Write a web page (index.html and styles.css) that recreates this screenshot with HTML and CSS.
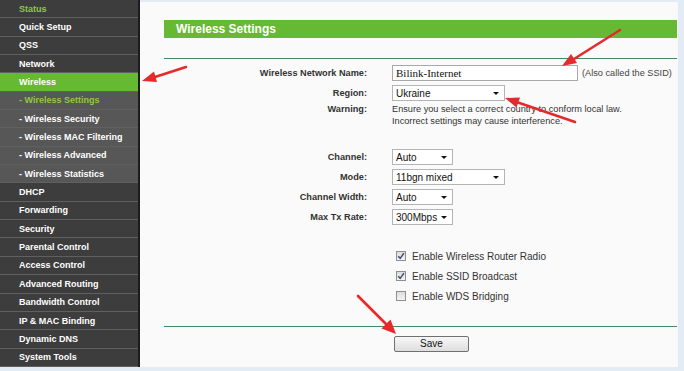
FILE: index.html
```html
<!DOCTYPE html>
<html>
<head>
<link rel="stylesheet" href="styles.css">
</head>
<body>

<div class="page">
  <div class="menu">
    <a class="item lead" href="#">Status</a>
    <a class="item" href="#">Quick Setup</a>
    <a class="item" href="#">QSS</a>
    <a class="item" href="#">Network</a>
    <a class="item active" href="#">Wireless</a>
    <a class="item sub current" href="#">- Wireless Settings</a>
    <a class="item sub" href="#">- Wireless Security</a>
    <a class="item sub" href="#">- Wireless MAC Filtering</a>
    <a class="item sub" href="#">- Wireless Advanced</a>
    <a class="item sub" href="#">- Wireless Statistics</a>
    <a class="item" href="#">DHCP</a>
    <a class="item" href="#">Forwarding</a>
    <a class="item" href="#">Security</a>
    <a class="item" href="#">Parental Control</a>
    <a class="item" href="#">Access Control</a>
    <a class="item" href="#">Advanced Routing</a>
    <a class="item" href="#">Bandwidth Control</a>
    <a class="item" href="#">IP &amp; MAC Binding</a>
    <a class="item" href="#">Dynamic DNS</a>
    <a class="item" href="#">System Tools</a>
  </div>

  <div class="main">
    <div class="panel">
      <div class="title">Wireless Settings</div>
      <div class="rule top"></div>

      <div class="row first">
        <label class="lbl">Wireless Network Name:</label>
        <div class="val">
          <input class="text" type="text" value="Bilink-Internet">
          <span class="note">(Also called the SSID)</span>
        </div>
      </div>
      <div class="row">
        <label class="lbl">Region:</label>
        <div class="val">
          <span class="sel wide"><select><option>Ukraine</option></select></span>
        </div>
      </div>
      <div class="row warn">
        <label class="lbl">Warning:</label>
        <div class="val msg">
          Ensure you select a correct country to conform local law.<br>
          Incorrect settings may cause interference.
        </div>
      </div>

      <div class="row gap">
        <label class="lbl">Channel:</label>
        <div class="val"><span class="sel"><select><option>Auto</option></select></span></div>
      </div>
      <div class="row">
        <label class="lbl">Mode:</label>
        <div class="val"><span class="sel wide"><select><option>11bgn mixed</option></select></span></div>
      </div>
      <div class="row">
        <label class="lbl">Channel Width:</label>
        <div class="val"><span class="sel"><select><option>Auto</option></select></span></div>
      </div>
      <div class="row">
        <label class="lbl">Max Tx Rate:</label>
        <div class="val"><span class="sel"><select><option>300Mbps</option></select></span></div>
      </div>

      <div class="row gap">
        <span></span>
        <div class="val check">
          <span class="box"><svg width="8" height="8" viewBox="0 0 8 8"><path d="M1.2 4.2 L3.2 6.3 L6.9 1.2" fill="none" stroke="#3b4a6b" stroke-width="1.4"/></svg></span>
          Enable Wireless Router Radio
        </div>
      </div>
      <div class="row">
        <span></span>
        <div class="val check">
          <span class="box"><svg width="8" height="8" viewBox="0 0 8 8"><path d="M1.2 4.2 L3.2 6.3 L6.9 1.2" fill="none" stroke="#3b4a6b" stroke-width="1.4"/></svg></span>
          Enable SSID Broadcast
        </div>
      </div>
      <div class="row">
        <span></span>
        <div class="val check">
          <span class="box"></span>
          Enable WDS Bridging
        </div>
      </div>

      <div class="rule bottom"></div>
      <div class="actions">
        <button class="btn">Save</button>
      </div>
    </div>
  </div>
</div>

<!-- red annotation arrows drawn over the screenshot -->
<svg class="marks" width="684" height="371" viewBox="0 0 684 371">
  <g stroke="#e52a2c" stroke-width="2.6" stroke-linecap="round" fill="#e52a2c">
    <line x1="186" y1="67" x2="155" y2="77"/>
    <polygon stroke="none" points="142,81 157,82 154,71.5"/>
    <line x1="620" y1="30" x2="574" y2="59"/>
    <polygon stroke="none" points="562,66 577,63 571,54"/>
    <line x1="575" y1="122" x2="518" y2="102.5"/>
    <polygon stroke="none" points="505,98 520,97.5 516.5,107.5"/>
    <line x1="358" y1="296" x2="386" y2="324"/>
    <polygon stroke="none" points="396,334 390.5,319.5 381.5,328.5"/>
  </g>
</svg>

</body>
</html>
```

FILE: styles.css
```css
body {
    margin: 0;
    width: 684px;
    height: 371px;
    overflow: hidden;
    background-color: #e3ecf5;
    font-family: "Liberation Sans", Arial, sans-serif;
    color: #333;
}

.page {
    display: flex;
    height: 367px;
}

/* Left menu */
.menu {
    width: 138px;
    display: flex;
    flex-direction: column;
    background-color: #3d3d3d;
    border-right: 2px solid #1c1c1c;
}

.menu .item {
    flex: 1 1 0;
    display: flex;
    align-items: center;
    padding-left: 19px;
    border-bottom: 1px solid #606060;
    color: #fff;
    font-size: 9px;
    font-weight: bold;
    text-decoration: none;
}

.menu .item.lead {
    color: #8fc941;
}

.menu .item.active {
    background-color: #66b933;
}

.menu .item.sub {
    background-color: #575757;
}

.menu .item.current {
    color: #8fc941;
}

/* Content */
.main {
    flex: 1;
    margin-right: 6px;
    background-color: #fafafa;
    border-top: 2px solid #e3ecf5;
    padding-top: 18px;
}

.panel {
    margin-left: 24px;
    margin-right: 1px;
}

.title {
    height: 18px;
    line-height: 18px;
    padding-left: 12px;
    background-color: #66b933;
    color: #fff;
    font-size: 12px;
    font-weight: bold;
}

.rule {
    height: 1px;
    background-color: #3f8d5c;
}

.rule.top {
    margin-top: 20px;
}

.rule.bottom {
    margin-top: 20px;
}

.row {
    display: grid;
    grid-template-columns: 203px 1fr;
    column-gap: 25px;
    height: 20px;
    align-items: center;
}

.row.first {
    margin-top: 4px;
}

.row.gap {
    margin-top: 19px;
}

.row.warn {
    height: 25px;
    align-items: start;
}

.lbl {
    text-align: right;
    font-size: 9.2px;
    font-weight: bold;
    color: #333;
}

.row.warn .lbl {
    line-height: 12px;
}

.val {
    display: flex;
    align-items: center;
    font-size: 9.2px;
}

.val.msg {
    display: block;
    line-height: 12px;
    color: #333;
}

.text {
    box-sizing: border-box;
    width: 186px;
    height: 16px;
    margin: 0;
    padding: 0 3px;
    border: 1px solid #a9a9a9;
    background: #fff;
    font-family: "Liberation Serif", "Times New Roman", serif;
    font-size: 11px;
    color: #111;
}

.note {
    margin-left: 4px;
    color: #444;
}

/* Drop-down lists */
.sel {
    position: relative;
    display: inline-block;
    width: 61px;
    height: 16px;
}

.sel.wide {
    width: 113px;
}

.sel select {
    appearance: none;
    -webkit-appearance: none;
    box-sizing: border-box;
    width: 100%;
    height: 16px;
    margin: 0;
    padding: 0 0 0 3px;
    border: 1px solid #b4b4b4;
    border-radius: 0;
    background: #fff;
    font-family: "Liberation Sans", Arial, sans-serif;
    font-size: 10px;
    color: #111;
}

.sel::after {
    content: "";
    position: absolute;
    right: 6px;
    top: 7px;
    border-left: 3px solid transparent;
    border-right: 3px solid transparent;
    border-top: 3px solid #111;
}

/* Checkboxes */
.val.check {
    padding-left: 4px;
    font-size: 10px;
    color: #333;
}

.box {
    box-sizing: border-box;
    width: 10px;
    height: 10px;
    margin-right: 6px;
    display: flex;
    align-items: center;
    justify-content: center;
    border: 1px solid #8e8f8f;
    background: linear-gradient(#dcdcdc, #f4f4f4);
}

.actions {
    padding-top: 6px;
    padding-left: 230px;
}

.btn {
    width: 75px;
    height: 16px;
    padding: 0;
    border: 1px solid #707070;
    border-radius: 2px;
    background: linear-gradient(#f7f7f7, #dedede);
    font-family: "Liberation Sans", Arial, sans-serif;
    font-size: 10px;
    color: #111;
}

.marks {
    position: absolute;
    top: 0;
    left: 0;
    pointer-events: none;
}
```
